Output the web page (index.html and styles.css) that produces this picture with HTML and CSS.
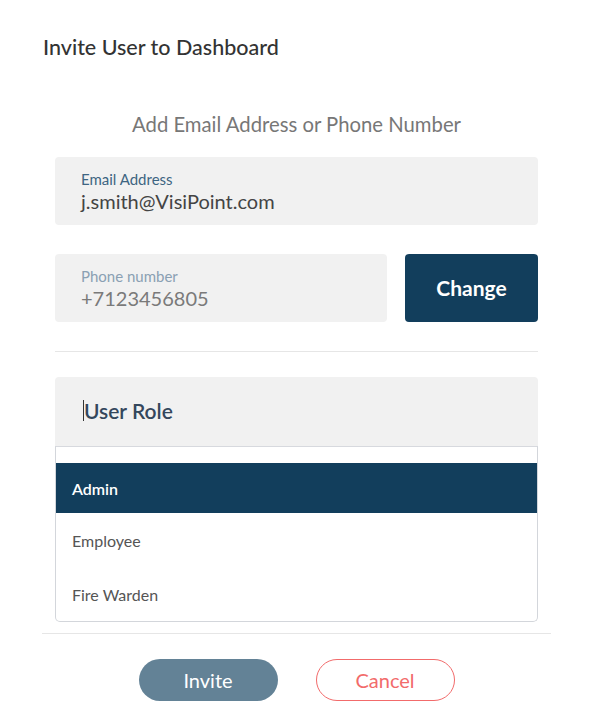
FILE: index.html
```html
<!DOCTYPE html>
<html>
<head>
<meta charset="utf-8">
<title>Invite User</title>
<link rel="stylesheet" href="styles.css">
</head>
<body>
<div class="dialog">
	<h2 class="title">Invite User to Dashboard</h2>

	<div class="content">
		<p class="subtitle">Add Email Address or Phone Number</p>

		<div class="field">
			<span class="label">Email Address</span>
			<span class="value">j.smith@VisiPoint.com</span>
		</div>

		<div class="phonerow">
			<div class="field phone">
				<span class="label">Phone number</span>
				<span class="value">+7123456805</span>
			</div>
			<button class="change">Change</button>
		</div>

		<hr class="divider">

		<div class="role">
			<span class="caret"></span>User Role
		</div>
		<ul class="options">
			<li class="selected">Admin</li>
			<li>Employee</li>
			<li>Fire Warden</li>
		</ul>
	</div>

	<div class="footer">
		<button class="invite">Invite</button>
		<button class="cancel">Cancel</button>
	</div>
</div>
</body>
</html>
```

FILE: styles.css
```css
body {
	margin: 0;
	background: #fff;
	font-family: Lato, "Open Sans", sans-serif;
}
.dialog {
	width: 601px;
	height: 718px;
	box-sizing: border-box;
	padding: 0 50px 0 42px;
}
.title {
	margin: 0;
	padding-top: 35px;
	font-size: 21.5px;
	font-weight: 500;
	color: #333;
	line-height: 24px;
	padding-left: 1px;
}
.content {
	padding: 0 13px 0 13px;
}
.subtitle {
	margin: 53px 0 0;
	text-align: center;
	font-size: 20.3px;
	color: #777;
	line-height: 24px;
	padding-left: 0;
}
.field {
	margin-top: 21px;
	height: 68px;
	box-sizing: border-box;
	background: #f1f1f1;
	border-radius: 4px;
	padding: 13px 26px 0;
	display: flex;
	flex-direction: column;
}
.label {
	font-size: 15px;
	line-height: 19px;
	color: #3e6582;
}
.value {
	font-size: 20px;
	line-height: 24px;
	color: #444;
}
.phonerow {
	display: flex;
	gap: 18px;
	margin-top: 29px;
}
.phonerow .field {
	margin-top: 0;
	flex: 1;
}
.phone .label {
	color: #8aa0b3;
}
.phone .value {
	color: #7a7a7a;
}
.change {
	width: 133px;
	height: 68px;
	border: 0;
	border-radius: 4px;
	background: #123e5c;
	color: #fff;
	font-family: inherit;
	font-size: 21px;
	font-weight: 700;
	padding-bottom: 3px;
}
.divider {
	margin: 29px 0 0;
	border: 0;
	border-top: 1px solid #e6e6e6;
}
.role {
	margin-top: 25px;
	height: 69px;
	background: #f1f1f1;
	border-radius: 4px 4px 0 0;
	display: flex;
	align-items: center;
	padding-left: 28px;
	padding-bottom: 2px;
	box-sizing: border-box;
	font-size: 21px;
	font-weight: 600;
	color: #34475c;
}
.caret {
	width: 1px;
	height: 21px;
	background: #333;
	margin-right: 0;
}
.options {
	list-style: none;
	margin: 0;
	padding: 16px 0 0;
	border: 1px solid #d3d6db;
	border-top-color: #d7d9de;
	border-radius: 0 0 5px 5px;
	height: 176px;
	box-sizing: border-box;
}
.options li {
	height: 54px;
	display: flex;
	align-items: center;
	padding-left: 16px;
	font-size: 16px;
	color: #555;
}
.options li.selected {
	height: 50px;
	background: #123e5c;
	color: #fff;
	font-weight: 600;
}
.footer {
	margin-top: 11px;
	border-top: 1px solid #e6e6e6;
	display: flex;
	justify-content: center;
	gap: 38px;
	padding-top: 25px;
}
.footer button {
	width: 139px;
	height: 42px;
	border-radius: 21px;
	font-family: inherit;
	font-size: 20px;
}
.invite {
	background: #638296;
	border: 0;
	color: #fff;
}
.cancel {
	background: #fff;
	border: 1px solid #f26b6b;
	color: #f26b6b;
}
```
